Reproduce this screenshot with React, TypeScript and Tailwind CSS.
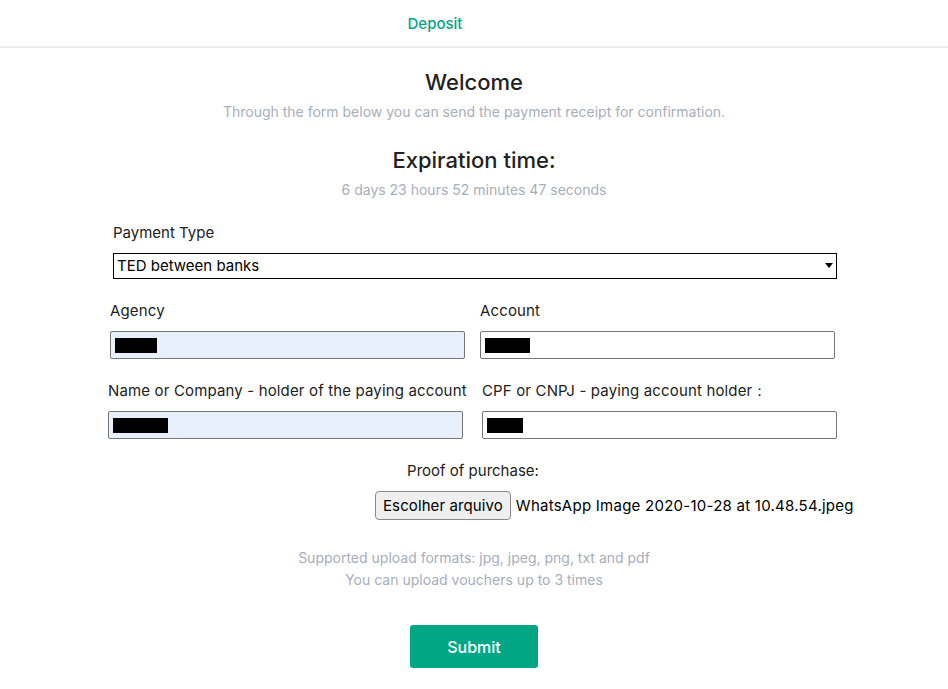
import { ChangeEvent } from 'react';

const noop = (_e: ChangeEvent<HTMLInputElement | HTMLSelectElement>) => {};

export default function App() {
  return (
    <div className="min-h-screen bg-white font-['Inter','Liberation_Sans',sans-serif] text-[#222]">
      {/* Header */}
      <header className="h-[48px] border-b-2 border-[#eeeeee]">
        <div className="h-full flex items-center justify-center pr-[78px] pt-[3px]">
          <span className="text-[15px] font-medium text-[#01a784]">Deposit</span>
        </div>
      </header>

      <main className="w-[730px] mx-auto">
        {/* Intro */}
        <div className="text-center pt-[20px]">
          <h1 className="text-[22px] font-medium leading-[28px]">Welcome</h1>
          <p className="mt-[5px] text-[14px] text-[#a7aebc]">
            Through the form below you can send the payment receipt for confirmation.
          </p>
          <h2 className="mt-[24px] text-[22px] font-medium leading-[28px]">Expiration time:</h2>
          <p className="mt-[5px] text-[14px] text-[#a7aebc]">6 days 23 hours 52 minutes 47 seconds</p>
        </div>

        {/* Form */}
        <form className="mt-[23px]">
          <div className="pl-[4px] pr-[2px]">
            <label className="block text-[15px] leading-[20px]">Payment Type</label>
            <div className="relative mt-[10px]">
              <select
                onChange={noop}
                defaultValue="ted"
                className="w-full h-[26px] appearance-none border border-black bg-white pl-[3px] text-[15px] text-black outline-none"
              >
                <option value="ted">TED between banks</option>
              </select>
              <span className="pointer-events-none absolute right-[4px] top-[10px] w-0 h-0 border-l-[4px] border-r-[4px] border-t-[5px] border-l-transparent border-r-transparent border-t-black" />
            </div>
          </div>

          <div className="flex gap-[15px] mt-[22px] pl-[1px]">
            <Field label="Agency" filled redact={42} />
            <Field label="Account" redact={45} />
          </div>

          <div className="flex gap-[19px] mt-[22px] -ml-[1px]">
            <Field label="Name or Company - holder of the paying account" filled redact={55} />
            <Field label="CPF or CNPJ - paying account holder：" redact={36} />
          </div>

          {/* Upload */}
          <div className="mt-[22px] flex flex-col items-center">
            <span className="text-[15px] leading-[20px] -ml-[2px]">Proof of purchase:</span>
            <div className="mt-[10px] flex items-center gap-[5px] self-start ml-[266px] w-max">
              <span className="shrink-0 whitespace-nowrap h-[29px] px-[7px] flex items-center rounded-[4px] border border-[#8a8a8a] bg-[#efefef] text-[15px] tracking-[0.1px] text-black">
                Escolher arquivo
              </span>
              <span className="shrink-0 text-[15px] tracking-[0.25px] text-black whitespace-nowrap">
                WhatsApp Image 2020-10-28 at 10.48.54.jpeg
              </span>
            </div>
          </div>

          <div className="mt-[27px] text-center text-[14px] leading-[22px] text-[#a7aebc]">
            <p>Supported upload formats: jpg, jpeg, png, txt and pdf</p>
            <p>You can upload vouchers up to 3 times</p>
          </div>

          <div className="mt-[34px] flex justify-center">
            <button
              type="button"
              className="w-[128px] h-[43px] rounded-[3px] bg-[#01a784] text-white text-[16px] font-medium"
            >
              Submit
            </button>
          </div>
        </form>
      </main>
    </div>
  );
}

interface FieldProps {
  label: string;
  filled?: boolean;
  redact: number;
}

function Field({ label, filled, redact }: FieldProps) {
  return (
    <div className="w-[355px]">
      <label className="block text-[15px] leading-[20px] tracking-[0.15px] whitespace-nowrap">{label}</label>
      <div
        className={`relative mt-[10px] h-[28px] border border-[#767676] rounded-[2px] ${
          filled ? 'bg-[#e8f0fe]' : 'bg-white'
        }`}
      >
        <span className="absolute left-[4px] top-[6px] h-[15px] bg-black" style={{ width: redact }} />
      </div>
    </div>
  );
}
